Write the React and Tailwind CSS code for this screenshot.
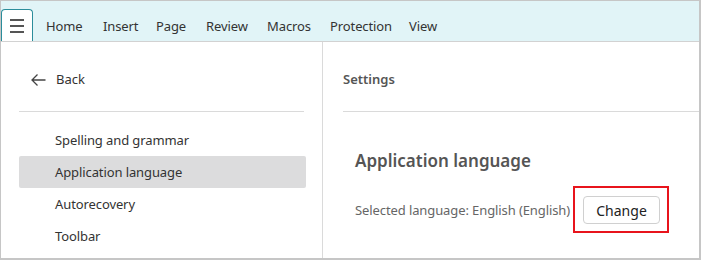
const tabs = [
  { label: "Home", w: "w-[57px]" },
  { label: "Insert", w: "w-[53px]" },
  { label: "Page", w: "w-[50px]" },
  { label: "Review", w: "w-[61px]" },
  { label: "Macros", w: "w-[63px]" },
  { label: "Protection", w: "w-[79px]" },
  { label: "View", w: "w-[40px]" },
];
const menu = ["Spelling and grammar", "Application language", "Autorecovery", "Toolbar"];

const App = () => {
  return (
    <div
      className="w-[701px] h-[260px] bg-white border-t border-l border-r-2 border-b-2 border-[#c6c6c6] flex flex-col overflow-hidden text-[13px] text-[#333]"
      style={{ fontFamily: '"Noto Sans", "Open Sans", sans-serif' }}
    >
      {/* Toolbar */}
      <div className="h-[41px] shrink-0 bg-[#e1f4f7] border-b border-[#d2d2d2] flex items-end">
        <div className="w-[32px] h-[32px] bg-white border border-b-0 border-[#2b8d9b] rounded-t-[4px] flex flex-col items-center justify-center gap-[4px]">
          <span className="block w-[14px] h-[2px] bg-[#555]" />
          <span className="block w-[14px] h-[2px] bg-[#555]" />
          <span className="block w-[14px] h-[2px] bg-[#555]" />
        </div>
        <div className="flex h-[32px] items-center pt-[3px] pl-[13px] tracking-[-0.1px]">
          {tabs.map((t) => (
            <span key={t.label} className={t.w + " text-[#333]"}>{t.label}</span>
          ))}
        </div>
      </div>

      <div className="flex flex-1 min-h-0">
        {/* Left panel */}
        <div className="w-[322px] shrink-0 border-r border-[#dadada] pl-[18px] pr-[16px]">
          <div className="h-8 mt-[22px] flex items-center pl-[12px] gap-[10px]">
            <svg width="15" height="12" viewBox="0 0 15 12" fill="none" stroke="#444" strokeWidth="1.3">
              <path d="M14.5 6H1M6.5 0.5L1 6l5.5 5.5" />
            </svg>
            <span>Back</span>
          </div>
          <div className="h-px bg-[#dadada] mt-[15px] mr-[2px]" />
          <div className="mt-[12px] flex flex-col tracking-[-0.1px]">
            {menu.map((m) => (
              <div
                key={m}
                className={
                  m === "Application language"
                    ? "h-8 flex items-center pl-[36px] pt-[1px] bg-[#dcdcdd] rounded-[2px]"
                    : "h-8 flex items-center pl-[36px] pt-[1px]"
                }
              >
                {m}
              </div>
            ))}
          </div>
        </div>

        {/* Right panel */}
        <div className="flex-1 pl-[20px]">
          <div className="h-8 mt-[22px] flex items-center font-semibold text-[#555]">Settings</div>
          <div className="h-px bg-[#dadada] mt-[15px]" />
          <div className="pl-[12px]">
            <div className="mt-[37px] text-[17px] font-semibold text-[#555] leading-[24px]">
              Application language
            </div>
            <div className="mt-[13px] flex items-center">
              <span className="text-[#666] tracking-[-0.1px] pt-[2px]">Selected language: English (English)</span>
              <div className="ml-[3px] border-2 border-[#e8141c] pl-[8px] pr-[7px] pt-[8px] pb-[7px]">
                <button className="h-[28px] w-[77px] border border-[#d0d0d0] rounded-[4px] bg-white text-[#222] text-[14px]">
                  Change
                </button>
              </div>
            </div>
          </div>
        </div>
      </div>
    </div>
  );
};

export default App;
